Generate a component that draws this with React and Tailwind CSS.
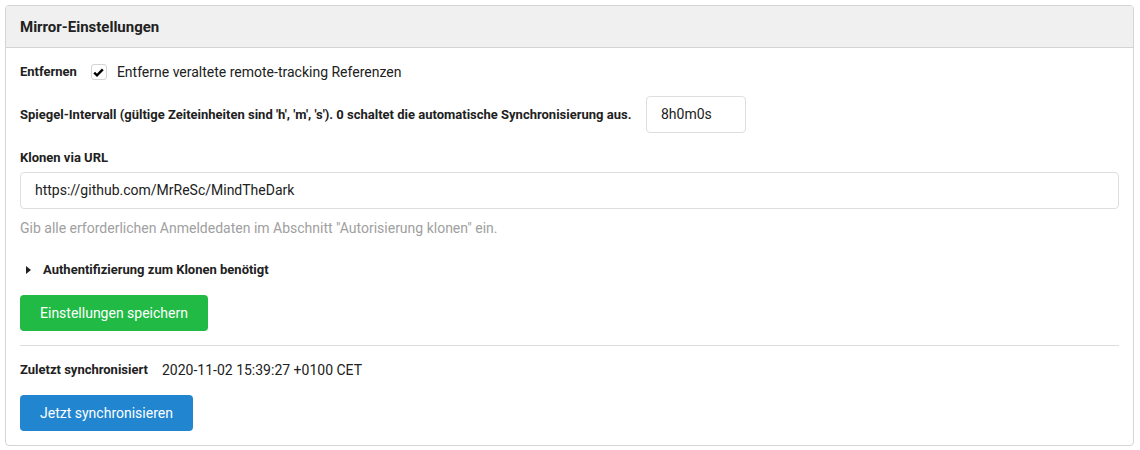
export default function App() {
  return (
    <div className="bg-white w-[1140px] h-[450px] pt-[5px] pl-[5px] font-['Roboto',sans-serif] text-[14px] text-[#212121]">
      <div className="w-[1129px] border border-[#d4d4d5] rounded-[4px] overflow-hidden">
        {/* Kopfzeile */}
        <div className="h-[42px] bg-[#f0f0f0] border-b border-[#d4d4d5] flex items-center px-[14px]">
          <h4 className="font-bold text-[15px] leading-5 text-[#212121]">Mirror-Einstellungen</h4>
        </div>

        <div className="px-[14px] pt-[16px] pb-[14px]">
          <div className="h-4 flex items-center">
            <span className="font-bold text-[13px]">Entfernen</span>
            <span className="ml-[14px] w-4 h-4 border border-[#d4d4d5] rounded-[3px] flex items-center justify-center">
              <svg width="11" height="9" viewBox="0 0 11 9">
                <path d="M1.2 4.6 L4 7.3 L9.8 1.3" fill="none" stroke="#000" strokeWidth="2.4" />
              </svg>
            </span>
            <span className="ml-[10px]">Entferne veraltete remote-tracking Referenzen</span>
          </div>

          <div className="mt-4 h-[37px] flex items-center">
            <span className="font-bold text-[13px]">
              Spiegel-Intervall (gültige Zeiteinheiten sind 'h', 'm', 's'). 0 schaltet die automatische Synchronisierung aus.
            </span>
            <div className="ml-auto mr-[373px] w-[100px] h-[37px] border border-[#dedede] rounded-[4px] flex items-center px-[14px]">
              8h0m0s
            </div>
          </div>

          <div className="mt-[17px] h-4 flex items-center font-bold text-[13px]">Klonen via URL</div>
          <div className="mt-[6px] h-[37px] border border-[#dedede] rounded-[4px] flex items-center px-[14px]">
            https://github.com/MrReSc/MindTheDark
          </div>
          <div className="mt-[9px] leading-5 text-[#a0a0a0]">
            Gib alle erforderlichen Anmeldedaten im Abschnitt "Autorisierung klonen" ein.
          </div>

          <div className="mt-[22px] h-5 flex items-center">
            <svg className="ml-[6px]" width="5" height="8" viewBox="0 0 5 8">
              <path d="M0 0 L5 4 L0 8 Z" fill="#212121" />
            </svg>
            <span className="ml-[12px] font-bold text-[13px]">Authentifizierung zum Klonen benötigt</span>
          </div>

          <button className="mt-[15px] h-[36px] w-[188px] rounded-[4px] bg-[#21ba45] text-white text-[14px] flex items-center justify-center">
            Einstellungen speichern
          </button>

          <div className="mt-[14px] border-t border-[#dedede]"></div>

          <div className="mt-[14px] h-5 flex items-center">
            <span className="font-bold text-[13px]">Zuletzt synchronisiert</span>
            <span className="ml-[14px]">2020-11-02 15:39:27 +0100 CET</span>
          </div>

          <button className="mt-[15px] h-[36px] w-[173px] rounded-[4px] bg-[#2185d0] text-white text-[14px] flex items-center justify-center">
            Jetzt synchronisieren
          </button>
        </div>
      </div>
    </div>
  );
}
